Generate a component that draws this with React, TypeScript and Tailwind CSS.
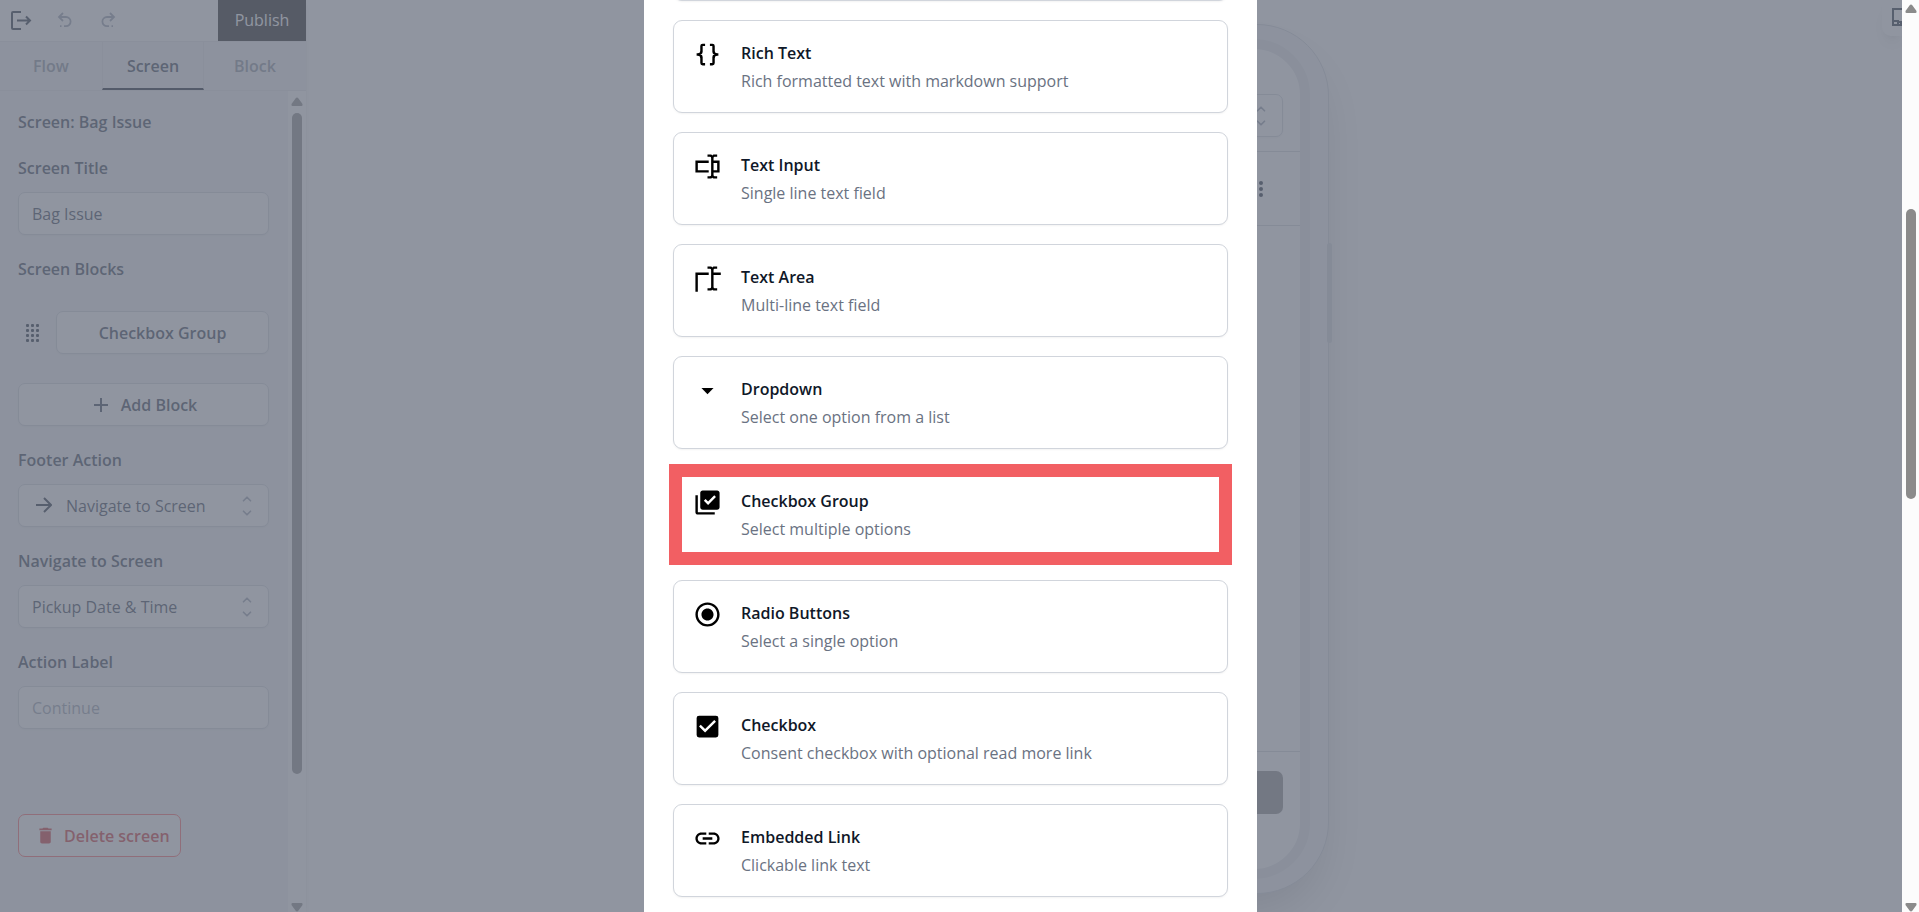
import React from "react";
import { ChevronDown, ChevronUp } from "lucide-react";
import {
  MdArrowDropDown,
  MdCheckBox,
  MdDelete,
  MdLibraryAddCheck,
  MdLink,
  MdRadioButtonChecked,
} from "react-icons/md";

const IBEAM =
  "V19A1 1 0 0 0 18 20H20V22H17.5C16.95 22 16 21.55 16 21C16 21.55 15.05 22 14.5 22H12V20H14A1 1 0 0 0 15 19V5A1 1 0 0 0 14 4H12V2H14.5C15.05 2 16 2.45 16 3C16 2.45 16.95 2 17.5 2H20V4H18A1 1 0 0 0 17 5V7";

const BracesIcon = () => (
  <svg viewBox="0 0 24 24" fill="currentColor" className="size-full">
    <path d="M8 3A2 2 0 0 0 6 5V9A2 2 0 0 1 4 11H3V13H4A2 2 0 0 1 6 15V19A2 2 0 0 0 8 21H10V19H8V14A2 2 0 0 0 6 12A2 2 0 0 0 8 10V5H10V3M16 3A2 2 0 0 1 18 5V9A2 2 0 0 0 20 11H21V13H20A2 2 0 0 0 18 15V19A2 2 0 0 1 16 21H14V19H16V14A2 2 0 0 1 18 12A2 2 0 0 1 16 10V5H14V3H16Z" />
  </svg>
);

const TextInputIcon = () => (
  <svg viewBox="0 0 24 24" fill="currentColor" className="size-full">
    <path d={`M17 7H22V17H17${IBEAM}M2 7H13V9H4V15H13V17H2V7M20 15V9H17V15H20Z`} />
  </svg>
);

const TextAreaIcon = () => (
  <svg viewBox="0 0 24 24" fill="currentColor" className="size-full">
    <path d={`M17 7H23V9H17${IBEAM}M2 7H13V9H4V23H2V7Z`} />
  </svg>
);

interface BlockType {
  title: string;
  description: string;
  icon: React.ReactNode;
  highlighted?: boolean;
}

const blockTypes: BlockType[] = [
  { title: "Rich Text", description: "Rich formatted text with markdown support", icon: <BracesIcon /> },
  { title: "Text Input", description: "Single line text field", icon: <TextInputIcon /> },
  { title: "Text Area", description: "Multi-line text field", icon: <TextAreaIcon /> },
  { title: "Dropdown", description: "Select one option from a list", icon: <MdArrowDropDown className="size-full" /> },
  { title: "Checkbox Group", description: "Select multiple options", icon: <MdLibraryAddCheck className="size-full" />, highlighted: true },
  { title: "Radio Buttons", description: "Select a single option", icon: <MdRadioButtonChecked className="size-full" /> },
  { title: "Checkbox", description: "Consent checkbox with optional read more link", icon: <MdCheckBox className="size-full" /> },
  { title: "Embedded Link", description: "Clickable link text", icon: <MdLink className="size-full" /> },
];

const controlClass = "h-[43px] w-full rounded-[7px] border border-gray-300 bg-white shadow-xs";

const UpDown = () => (
  <span className="pointer-events-none flex flex-col items-center text-gray-400">
    <ChevronUp className="size-[14px]" strokeWidth={3} />
    <ChevronDown className="size-[14px]" strokeWidth={3} />
  </span>
);

const ScrollArrow = ({ down = false }: { down?: boolean }) => (
  <svg viewBox="0 0 12 9" className={down ? "h-[9px] w-3 rotate-180" : "h-[9px] w-3"} fill="currentColor">
    <path d="M6 0.5 Q6.8 0.5 7.3 1.3 L11.5 7 Q12 9 10.5 9 H1.5 Q0 9 0.5 7 L4.7 1.3 Q5.2 0.5 6 0.5Z" />
  </svg>
);

const Sidebar = () => (
  <aside className="flex w-[306px] shrink-0 flex-col bg-gray-100 shadow-md">
    <div className="flex h-[42px] items-stretch border-b border-gray-200 bg-white">
      <div className="flex flex-1 items-center pl-2 text-gray-800">
        <button aria-label="Exit">
          <svg viewBox="0 0 24 24" className="size-6" fill="none" stroke="currentColor" strokeWidth="2">
            <path d="M13 3H5Q4 3 4 4V19Q4 20 5 20H13M9 11.5H22M18 7.5l4 4-4 4" />
          </svg>
        </button>
        <button aria-label="Undo" className="ml-[23px] text-gray-400">
          <svg viewBox="0 0 20 20" className="size-5" fill="none" stroke="currentColor" strokeWidth="1.8">
            <path d="M8 2L4 6l4 4M4.5 6H11a4.6 4.6 0 0 1 0 9.2H9M5 15.2h1.5" />
          </svg>
        </button>
        <button aria-label="Redo" className="ml-[23px] text-gray-400">
          <svg viewBox="0 0 20 20" className="size-5" fill="none" stroke="currentColor" strokeWidth="1.8">
            <path d="M12 2l4 4-4 4M15.5 6H9a4.6 4.6 0 0 0 0 9.2h2M13.5 15.2h1.5" />
          </svg>
        </button>
      </div>
      <button className="h-[41px] w-[88px] bg-zinc-900 pb-0.5 text-white">Publish</button>
    </div>

    <nav className="grid h-[49px] grid-cols-3 border-b border-gray-200 font-semibold text-[#8b93a1]">
      <button>Flow</button>
      <button className="border-x border-b-2 border-x-gray-200 border-b-gray-900 pt-0.5 text-gray-700">Screen</button>
      <button>Block</button>
    </nav>

    <div className="flex min-h-0 flex-1">
      <div className="flex min-w-0 flex-1 flex-col pt-[19px] pr-[19px] pl-[18px] leading-6 text-gray-700">
        <h2 className="font-semibold">Screen: Bag Issue</h2>

        <label htmlFor="screen-title" className="mt-[22px] font-semibold">Screen Title</label>
        <input id="screen-title" defaultValue="Bag Issue" className={`${controlClass} mt-3 px-[13px]`} />

        <h3 className="mt-[22px] font-semibold">Screen Blocks</h3>
        <div className="mt-[30px] flex items-center">
          <svg viewBox="0 0 14 18" className="mr-[17px] ml-[7px] h-[18px] w-[14px] shrink-0 text-gray-800" fill="currentColor">
            {[1, 6, 11].map((x) =>
              [0, 5, 10, 15].map((y) => <rect key={`${x}-${y}`} x={x} y={y} width="3" height="3" rx="1" />)
            )}
          </svg>
          <button className={`${controlClass} font-semibold`}>Checkbox Group</button>
        </div>
        <button className={`${controlClass} mt-[29px] flex items-center justify-center gap-[13px] pl-1 font-semibold`}>
          <svg viewBox="0 0 14 14" className="size-[14px]" stroke="currentColor" strokeWidth="2">
            <path d="M7 0V14M0 7H14" />
          </svg>
          Add Block
        </button>

        <label htmlFor="footer-action" className="mt-[22px] font-semibold">Footer Action</label>
        <div className="relative mt-3">
          <select id="footer-action" className={`${controlClass} appearance-none pr-8 pl-[47px]`}>
            <option>Navigate to Screen</option>
          </select>
          <svg viewBox="0 0 16 16" className="pointer-events-none absolute top-[13px] left-[18px] size-4 text-gray-800" fill="none" stroke="currentColor" strokeWidth="2">
            <path d="M0 8H15M8 1l7 7-7 7" />
          </svg>
          <div className="pointer-events-none absolute inset-y-0 right-[15px] flex items-center"><UpDown /></div>
        </div>

        <label htmlFor="navigate-to" className="mt-[22px] font-semibold">Navigate to Screen</label>
        <div className="relative mt-3">
          <select id="navigate-to" className={`${controlClass} appearance-none pr-8 pl-[13px]`}>
            <option>Pickup Date &amp; Time</option>
          </select>
          <div className="pointer-events-none absolute inset-y-0 right-[15px] flex items-center"><UpDown /></div>
        </div>

        <label htmlFor="action-label" className="mt-[22px] font-semibold">Action Label</label>
        <input id="action-label" placeholder="Continue" className={`${controlClass} mt-3 px-[13px] placeholder:text-gray-400`} />

        <button className="mt-[85px] flex h-[43px] items-center gap-2 self-start rounded-[7px] border border-red-400 bg-white pr-[10px] pl-4 font-semibold text-[#cf3036]">
          <MdDelete className="size-[21px]" />
          Delete screen
        </button>
      </div>

      <div className="flex w-[18px] shrink-0 flex-col items-center bg-white pt-[6px] text-[#8b8b8b]">
        <ScrollArrow />
        <div className="mt-[7px] min-h-0 w-[10px] flex-1 rounded-full bg-[#8b8b8b]" />
        <div className="mt-[129px]"><ScrollArrow down /></div>
      </div>
    </div>
  </aside>
);

const PhonePreview = () => (
  <div className="relative mt-6 h-[870px] w-[450px] rounded-[72px] border border-gray-300 bg-gray-100 px-[18px] py-[14px] shadow-2xl">
    <div className="absolute top-[218px] -right-1 h-[100px] w-[5px] rounded-full bg-gray-300" />
    <div className="flex h-full flex-col overflow-hidden rounded-[56px] border-[10px] border-gray-200 bg-white">
      <div className="flex h-[103px] items-end justify-end border-b border-gray-300 px-[17px] pb-[14px]">
        <div className={`${controlClass} flex items-center justify-end pr-[14px]`}><UpDown /></div>
      </div>
      <div className="flex h-[74px] flex-col items-end justify-center gap-[2px] border-b border-gray-300 pr-[37px]">
        <span className="size-1 rounded-full bg-gray-800" />
        <span className="size-1 rounded-full bg-gray-800" />
        <span className="size-1 rounded-full bg-gray-800" />
      </div>
      <div className="flex-1" />
      <div className="h-[118px] border-t border-gray-300 px-[17px] pt-[19px]">
        <div className="h-[43px] rounded-[7px] bg-[#8b8b8b]" />
      </div>
    </div>
  </div>
);

const BlockCard = ({ block }: { block: BlockType }) => (
  <button className="relative flex h-[93px] w-full shrink-0 items-start gap-[19px] rounded-[9px] border border-gray-300 bg-white py-[18px] pl-[19px] text-left shadow-xs">
    <span className="mt-px size-[29px] shrink-0 text-black">{block.icon}</span>
    <span className="flex flex-col leading-7">
      <span className="font-semibold text-gray-900">{block.title}</span>
      <span className="text-gray-500">{block.description}</span>
    </span>
    {block.highlighted && <span className="pointer-events-none absolute -inset-[5px] border-[13px] border-[#f25f63]" />}
  </button>
);

const App: React.FC = () => {
  return (
    <div className="flex h-screen overflow-hidden bg-white font-['Open_Sans','Noto_Sans',sans-serif] text-base">
      <div className="relative flex min-w-0 flex-1 overflow-hidden">
        <Sidebar />
        <main className="relative flex min-w-0 flex-1 justify-center">
          <PhonePreview />
          <button aria-label="Preview device" className="absolute top-0 right-0 h-9 w-5 overflow-hidden rounded-bl-[9px] bg-white pl-[10px] text-gray-800 shadow-lg">
            <svg viewBox="0 0 20 20" className="size-5" fill="none" stroke="currentColor" strokeWidth="2">
              <path d="M20 1H1V17H20M1 13H6V17M6 14H9V17" />
            </svg>
          </button>
        </main>

        {/* Backdrop and block picker */}
        <div className="absolute inset-0 flex justify-center bg-[#6b7280]/75 pr-px">
          <div role="dialog" aria-label="Block types" className="flex w-full max-w-[613px] flex-col gap-[19px] overflow-hidden bg-white px-[29px]">
            {/* tail of the card scrolled off the top */}
            <div className="-mt-[11px] h-3 shrink-0 rounded-b-[9px] border border-t-0 border-gray-300 shadow-xs" />
            {blockTypes.map((block) => (
              <BlockCard key={block.title} block={block} />
            ))}
          </div>
        </div>
      </div>

      <div className="flex w-[17px] shrink-0 flex-col items-center bg-[#fcfcfc] pt-1 text-[#8b8b8b]">
        <ScrollArrow />
        <div className="grid w-[10px] flex-1 grid-rows-[196fr_290fr_404fr]">
          <div className="row-start-2 rounded-full bg-[#8b8b8b]" />
        </div>
        <ScrollArrow down />
      </div>
    </div>
  );
};

export default App;
